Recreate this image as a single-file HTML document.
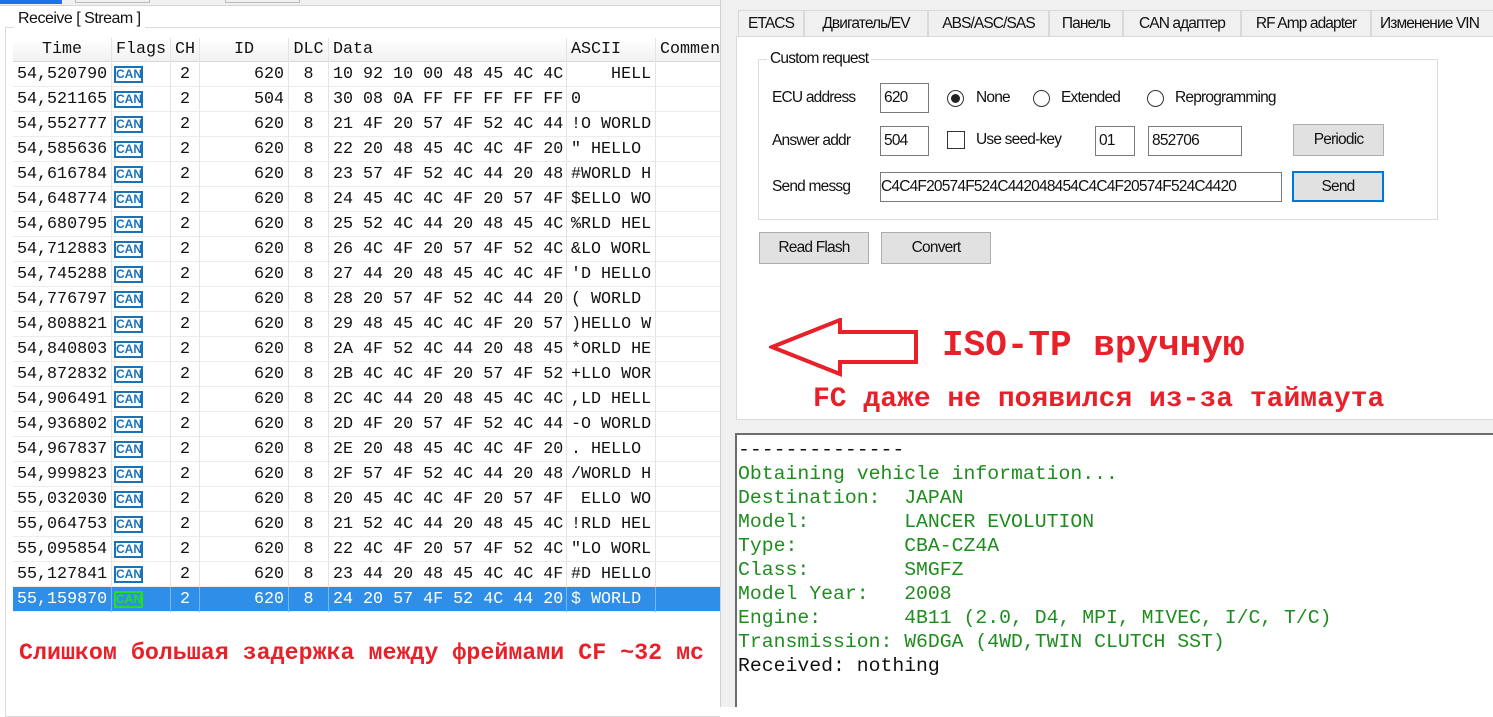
<!DOCTYPE html>
<html><head><meta charset="utf-8"><style>
*{margin:0;padding:0;box-sizing:border-box}
body{width:1493px;height:707px;overflow:hidden;background:#fff;position:relative;font-family:"Liberation Sans",sans-serif}
.abs{position:absolute}
.mono{font-family:"Liberation Mono","DejaVu Sans Mono",monospace}
#left{left:0;top:0;width:720px;height:707px;background:#fff}
.tbl{left:13px;top:38px;width:707px}
.row{position:absolute;left:0;height:25px;width:707px;border-bottom:1px solid #ececec;font-size:16.7px;line-height:25px;color:#111}
.row span{position:absolute;top:0;height:25px;border-right:1px solid #e4e4e4}
.hd{background:linear-gradient(#fff,#f1f1f1);border-bottom:1px solid #d8d8d8;height:24px;line-height:24px}
.sel{background:#2f8fe8;color:#fff}
.sel span{border-right-color:#7ab8f0}
.can{position:absolute;left:2px;top:4px;border:2px solid #1a73b8;color:#1a73b8;font-family:"Liberation Sans",sans-serif;font-size:12px;line-height:13px;height:17px;width:29px;text-align:center;font-weight:bold;letter-spacing:0}
.sel .can{border-color:#20e020;color:#20e020}
#right{left:720px;top:0;width:773px;height:707px;background:#f0f0f0;border-left:1px solid #cfcfcf}
.tab{position:absolute;top:10px;height:27px;border:1px solid #d9d9d9;border-bottom:none;background:#f0f0f0;font-size:15.5px;line-height:26px;text-align:center;color:#111;letter-spacing:-0.9px}
.inp{position:absolute;background:#fff;border:1px solid #7a7a7a;font-size:15.5px;line-height:28px;padding-left:3px;color:#111;overflow:hidden;white-space:nowrap;letter-spacing:-0.8px}
.btn{position:absolute;background:#e1e1e1;border:1px solid #adadad;font-size:15.5px;text-align:center;color:#111;letter-spacing:-0.8px}
.lbl{position:absolute;font-size:15.5px;color:#111;letter-spacing:-0.8px}
.rad{position:absolute;width:17px;height:17px;border:1px solid #333;border-radius:50%;background:#fff}
.log{font-size:19.8px;line-height:24px;color:#1f8c1f;white-space:pre}
.red{color:#e8202a;font-weight:bold;white-space:pre}
</style></head><body>
<div id="left" class="abs">
  <div class="abs" style="left:0;top:0;width:720px;height:6px;background:#f0f0f0;border-bottom:1px solid #d5d5d5"></div>
  <div class="abs" style="left:0;top:0;width:62px;height:4px;background:#1a73e8"></div>
  <div class="abs" style="left:75px;top:0;width:75px;height:3px;border:1px solid #bbb;border-top:none"></div>
  <div class="abs" style="left:225px;top:0;width:75px;height:3px;border:1px solid #bbb;border-top:none"></div>
  <div class="abs" style="left:5px;top:27px;width:715px;height:690px;border:1px solid #dcdcdc;border-right:none"></div>
  <div class="abs" style="left:14px;top:10px;background:#fff;padding:0 4px;font-size:16px;color:#111;letter-spacing:-0.5px">Receive [ Stream ]</div>
  <div class="abs tbl mono" id="tbl"></div>
  <div class="abs mono red" style="left:19px;top:640px;font-size:23.3px">Слишком большая задержка между фреймами CF ~32 мс</div>
</div>
<div id="right" class="abs">
  <div class="tab" style="left:17px;width:66px">ETACS</div>
  <div class="tab" style="left:83px;width:124px">Двигатель/EV</div>
  <div class="tab" style="left:207px;width:121px">ABS/ASC/SAS</div>
  <div class="tab" style="left:328px;width:74px">Панель</div>
  <div class="tab" style="left:402px;width:118px">CAN адаптер</div>
  <div class="tab" style="left:520px;width:130px">RF Amp adapter</div>
  <div class="tab" style="left:650px;width:130px;text-align:left;padding-left:8px">Изменение VIN</div>
  <div class="abs" style="left:15px;top:36px;width:758px;height:384px;background:#fff;border:1px solid #d9d9d9"></div>
  <div class="abs" style="left:37px;top:59px;width:680px;height:161px;border:1px solid #dcdcdc"></div>
  <div class="lbl" style="left:46px;top:50px;background:#fff;padding:0 3px">Custom request</div>
  <div class="lbl" style="left:51px;top:89px">ECU address</div>
  <div class="inp" style="left:159px;top:83px;width:49px;height:30px">620</div>
  <div class="rad" style="left:226px;top:90px"><div style="width:9px;height:9px;border-radius:50%;background:#222;margin:3px"></div></div>
  <div class="lbl" style="left:255px;top:89px">None</div>
  <div class="rad" style="left:312px;top:90px"></div>
  <div class="lbl" style="left:340px;top:89px">Extended</div>
  <div class="rad" style="left:426px;top:90px"></div>
  <div class="lbl" style="left:454px;top:89px">Reprogramming</div>
  <div class="lbl" style="left:51px;top:132px">Answer addr</div>
  <div class="inp" style="left:159px;top:126px;width:49px;height:30px">504</div>
  <div class="abs" style="left:226px;top:131px;width:18px;height:18px;border:1px solid #333;background:#fff"></div>
  <div class="lbl" style="left:255px;top:131px">Use seed-key</div>
  <div class="inp" style="left:374px;top:126px;width:40px;height:30px">01</div>
  <div class="inp" style="left:427px;top:126px;width:94px;height:30px">852706</div>
  <div class="btn" style="left:572px;top:124px;width:91px;height:32px;line-height:30px">Periodic</div>
  <div class="lbl" style="left:51px;top:178px">Send messg</div>
  <div class="inp" style="left:159px;top:172px;width:402px;height:30px;padding-left:0">C4C4F20574F524C442048454C4C4F20574F524C4420</div>
  <div class="btn" style="left:571px;top:171px;width:92px;height:31px;line-height:28px;border:2px solid #0078d7">Send</div>
  <div class="btn" style="left:38px;top:232px;width:110px;height:32px;line-height:30px">Read Flash</div>
  <div class="btn" style="left:160px;top:232px;width:110px;height:32px;line-height:30px">Convert</div>
  <svg class="abs" style="left:48px;top:318px" width="152" height="62"><path d="M3 29 L71 2 L71 14 L147 14 L147 44 L71 44 L71 56 Z" fill="none" stroke="#e8202a" stroke-width="4"/></svg>
  <div class="abs mono red" style="left:221px;top:325px;font-size:36px">ISO-TP вручную</div>
  <div class="abs mono red" style="left:92px;top:384px;font-size:28px">FC даже не появился из-за таймаута</div>
  <div class="abs" style="left:14px;top:433px;width:760px;height:274px;background:#fff;border:2px solid #6d6d6d;border-right:none;border-bottom:none"></div>
  <div class="abs mono log" style="left:17px;top:438px"><span style="color:#111">--------------</span>
Obtaining vehicle information...
Destination:  JAPAN
Model:        LANCER EVOLUTION
Type:         CBA-CZ4A
Class:        SMGFZ
Model Year:   2008
Engine:       4B11 (2.0, D4, MPI, MIVEC, I/C, T/C)
Transmission: W6DGA (4WD,TWIN CLUTCH SST)
<span style="color:#111">Received: nothing</span></div>
</div>
<script>
var d=[["54,520790","620","10 92 10 00 48 45 4C 4C","    HELL"],["54,521165","504","30 08 0A FF FF FF FF FF","0"],["54,552777","620","21 4F 20 57 4F 52 4C 44","!O WORLD"],["54,585636","620","22 20 48 45 4C 4C 4F 20","\" HELLO"],["54,616784","620","23 57 4F 52 4C 44 20 48","#WORLD H"],["54,648774","620","24 45 4C 4C 4F 20 57 4F","$ELLO WO"],["54,680795","620","25 52 4C 44 20 48 45 4C","%RLD HEL"],["54,712883","620","26 4C 4F 20 57 4F 52 4C","&LO WORL"],["54,745288","620","27 44 20 48 45 4C 4C 4F","'D HELLO"],["54,776797","620","28 20 57 4F 52 4C 44 20","( WORLD"],["54,808821","620","29 48 45 4C 4C 4F 20 57",")HELLO W"],["54,840803","620","2A 4F 52 4C 44 20 48 45","*ORLD HE"],["54,872832","620","2B 4C 4C 4F 20 57 4F 52","+LLO WOR"],["54,906491","620","2C 4C 44 20 48 45 4C 4C",",LD HELL"],["54,936802","620","2D 4F 20 57 4F 52 4C 44","-O WORLD"],["54,967837","620","2E 20 48 45 4C 4C 4F 20",". HELLO"],["54,999823","620","2F 57 4F 52 4C 44 20 48","/WORLD H"],["55,032030","620","20 45 4C 4C 4F 20 57 4F"," ELLO WO"],["55,064753","620","21 52 4C 44 20 48 45 4C","!RLD HEL"],["55,095854","620","22 4C 4F 20 57 4F 52 4C","\"LO WORL"],["55,127841","620","23 44 20 48 45 4C 4C 4F","#D HELLO"],["55,159870","620","24 20 57 4F 52 4C 44 20","$ WORLD"]];
var cols=[[0,99],[99,59],[158,29],[187,89],[276,40],[316,238],[554,89],[643,70]];
function row(cells,top,cls,al){var h='<div class="row '+cls+'" style="top:'+top+'px">';for(var i=0;i<8;i++){var c=cols[i];h+='<span style="left:'+c[0]+'px;width:'+c[1]+'px;text-align:'+al[i]+';padding:0 4px;white-space:pre;overflow:hidden">'+cells[i]+'</span>';}return h+'</div>';}
var h=row(["Time","Flags","CH","ID","DLC","Data","ASCII","Comment"],0,"hd",["center","left","center","center","center","left","left","left"]);
var al=["left","left","center","right","center","left","left","left"];
for(var i=0;i<d.length;i++){var r=d[i];h+=row([r[0],'<b class="can">CAN</b>',"2",r[1],"8",r[2],r[3].replace(/</g,"&lt;"),""],24+i*25,i==21?"sel":"",al);}
document.getElementById("tbl").innerHTML=h;
</script>
</body></html>
